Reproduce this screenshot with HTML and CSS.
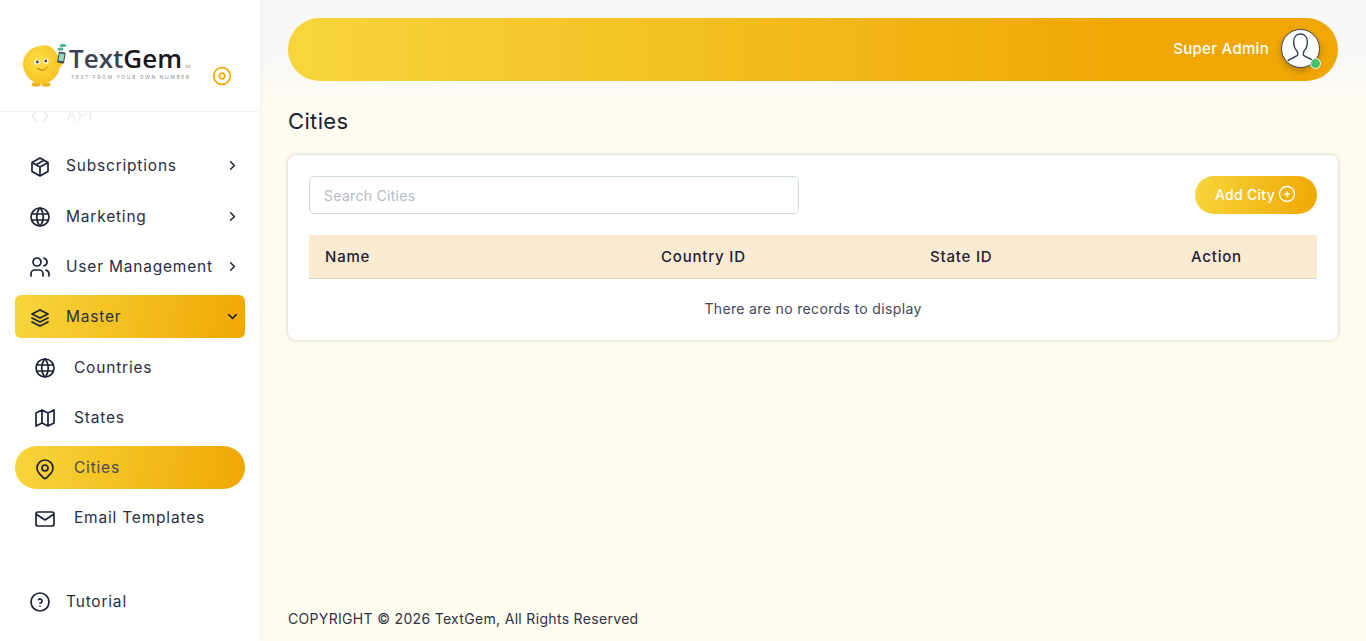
FILE: index.html
```html
<!DOCTYPE html>
<html lang="en">
<head>
  <meta charset="UTF-8" />
  <meta name="viewport" content="width=device-width, initial-scale=1" />
  <title>Cities - TextGem</title>
  <link rel="stylesheet" href="styles.css">
</head>
<body>

<svg class="sprite" aria-hidden="true">
  <symbol id="i-code" viewBox="0 0 24 24"><path d="M9 7l-5 5l5 5M15 7l5 5l-5 5"/></symbol>
  <symbol id="i-package" viewBox="0 0 24 24"><path d="M12 3l8 4.5v9l-8 4.5l-8 -4.5v-9l8 -4.5M12 12l8 -4.5M12 12v9M12 12l-8 -4.5M16 5.25l-8 4.5"/></symbol>
  <symbol id="i-world" viewBox="0 0 24 24"><path d="M3 12a9 9 0 1 0 18 0a9 9 0 0 0 -18 0M3.6 9h16.8M3.6 15h16.8M11.5 3a17 17 0 0 0 0 18M12.5 3a17 17 0 0 1 0 18"/></symbol>
  <symbol id="i-users" viewBox="0 0 24 24"><path d="M5 7a4 4 0 1 0 8 0a4 4 0 1 0 -8 0M3 21v-2a4 4 0 0 1 4 -4h4a4 4 0 0 1 4 4v2M16 3.13a4 4 0 0 1 0 7.75M21 21v-2a4 4 0 0 0 -3 -3.85"/></symbol>
  <symbol id="i-stack" viewBox="0 0 24 24"><path d="M12 4l-8 4l8 4l8 -4l-8 -4M4 12l8 4l8 -4M4 16l8 4l8 -4"/></symbol>
  <symbol id="i-map" viewBox="0 0 24 24"><path d="M3 7l6 -3l6 3l6 -3v13l-6 3l-6 -3l-6 3v-13M9 4v13M15 7v13"/></symbol>
  <symbol id="i-pin" viewBox="0 0 24 24"><path d="M9 11a3 3 0 1 0 6 0a3 3 0 0 0 -6 0M17.657 16.657l-4.243 4.243a2 2 0 0 1 -2.827 0l-4.244 -4.243a8 8 0 1 1 11.314 0z"/></symbol>
  <symbol id="i-mail" viewBox="0 0 24 24"><path d="M3 7a2 2 0 0 1 2 -2h14a2 2 0 0 1 2 2v10a2 2 0 0 1 -2 2h-14a2 2 0 0 1 -2 -2v-10zM3 7l9 6l9 -6"/></symbol>
  <symbol id="i-help" viewBox="0 0 24 24"><path d="M3 12a9 9 0 1 0 18 0a9 9 0 0 0 -18 0M12 16v.01M12 13a2 2 0 0 0 .914 -3.782a1.98 1.98 0 0 0 -2.414 .483"/></symbol>
  <symbol id="i-right" viewBox="0 0 24 24"><path d="M9 6l6 6l-6 6"/></symbol>
  <symbol id="i-down" viewBox="0 0 24 24"><path d="M6 9l6 6l6 -6"/></symbol>
  <symbol id="i-plus" viewBox="0 0 24 24"><path d="M3 12a9 9 0 1 0 18 0a9 9 0 0 0 -18 0M9 12h6M12 9v6"/></symbol>
</svg>

<div class="layout">
  <aside class="sidebar">
    <div class="brand">
      <div class="logo">
        <svg class="mascot" viewBox="0 0 46 44">
          <defs>
            <radialGradient id="body" cx="45%" cy="40%" r="60%">
              <stop offset="0" stop-color="#fde04a"/>
              <stop offset="1" stop-color="#f7c321"/>
            </radialGradient>
          </defs>
          <ellipse cx="14" cy="41.5" rx="4.5" ry="2.2" fill="#efb41d"/>
          <ellipse cx="24" cy="41.5" rx="4.5" ry="2.2" fill="#efb41d"/>
          <path d="M37 19l4-3l1 3l-4 6z" fill="#f7c321"/>
          <path d="M18 3c6-2 11 0 14 4c4 4 6 9 6 14c0 11-8 19-18 20C10 41 2 32 1 22C1 12 8 4 18 3z" fill="url(#body)"/>
          <circle cx="15" cy="19" r="2.6" fill="#fff"/>
          <circle cx="24" cy="18" r="2.6" fill="#fff"/>
          <circle cx="15.3" cy="19" r="1.4" fill="#3b4252"/>
          <circle cx="23.8" cy="18" r="1.4" fill="#3b4252"/>
          <path d="M15.5 25c3 3 7 3 10 -1" fill="none" stroke="#c98a12" stroke-width="1.1"/>
          <rect x="36" y="9" width="7" height="11" rx="1" fill="#3b4252" transform="rotate(10 39 14)"/>
          <rect x="37" y="10.5" width="5" height="7.5" fill="#8fd8c8" transform="rotate(10 39 14)"/>
          <ellipse cx="38.5" cy="6" rx="3" ry="1.6" fill="#47b89c"/>
          <ellipse cx="41" cy="2.5" rx="3.2" ry="1.7" fill="#47b89c"/>
        </svg>
        <div class="logo-text">
          <div class="logo-name">Text<b>Gem</b><small>.io</small></div>
          <div class="logo-tag">TEXT FROM YOUR OWN NUMBER</div>
        </div>
      </div>
      <svg class="toggle" viewBox="0 0 20 20"><circle cx="10" cy="10" r="8.3"/><circle cx="10" cy="10" r="2.8"/></svg>
    </div>

    <nav class="menu">
      <a class="item item-api"><svg class="icon"><use href="#i-code"/></svg><span>API</span></a>
      <a class="item"><svg class="icon"><use href="#i-package"/></svg><span>Subscriptions</span><svg class="chev"><use href="#i-right"/></svg></a>
      <a class="item"><svg class="icon"><use href="#i-world"/></svg><span>Marketing</span><svg class="chev"><use href="#i-right"/></svg></a>
      <a class="item"><svg class="icon"><use href="#i-users"/></svg><span>User Management</span><svg class="chev"><use href="#i-right"/></svg></a>
      <a class="item item-open"><svg class="icon"><use href="#i-stack"/></svg><span>Master</span><svg class="chev"><use href="#i-down"/></svg></a>
      <a class="item sub"><svg class="icon"><use href="#i-world"/></svg><span>Countries</span></a>
      <a class="item sub"><svg class="icon"><use href="#i-map"/></svg><span>States</span></a>
      <a class="item sub sub-active"><svg class="icon"><use href="#i-pin"/></svg><span>Cities</span></a>
      <a class="item sub"><svg class="icon"><use href="#i-mail"/></svg><span>Email Templates</span></a>
    </nav>

    <a class="item tutorial"><svg class="icon"><use href="#i-help"/></svg><span>Tutorial</span></a>
  </aside>

  <main class="content">
    <header class="topbar">
      <span class="username">Super Admin</span>
      <div class="avatar">
        <svg viewBox="0 0 38 38">
          <path d="M6 32c2-3 8-4 10-6c1-2 0-3-1-5c-2-2-3-5-3-9c0-5 3-8 7-8s7 3 7 8c0 4-1 7-3 9c-1 2-2 3-1 5c2 2 8 3 10 6" fill="none" stroke="#3d4656" stroke-width="1.5"/>
        </svg>
        <i class="dot"></i>
      </div>
    </header>

    <h1 class="page-title">Cities</h1>

    <section class="card">
      <div class="toolbar">
        <input class="search" type="text" placeholder="Search Cities" />
        <button class="btn-add">Add City<svg><use href="#i-plus"/></svg></button>
      </div>
      <div class="table-head">
        <div>Name</div>
        <div>Country ID</div>
        <div>State ID</div>
        <div>Action</div>
      </div>
      <div class="no-records">There are no records to display</div>
    </section>

    <footer class="footer">COPYRIGHT © 2026 TextGem, All Rights Reserved</footer>
  </main>
</div>

</body>
</html>
```

FILE: styles.css
```css
* {
  box-sizing: border-box;
}

body {
  margin: 0;
  font-family: Inter, "Noto Sans", sans-serif;
  color: #1d2136;
  background: #fffcf0;
  overflow: hidden;
}

.sprite {
  display: none;
}

.layout {
  display: flex;
  height: 641px;
}

/* sidebar */
.sidebar {
  width: 260px;
  flex-shrink: 0;
  background: #fff;
  box-shadow: 0 0 6px rgba(0,0,0,0.06);
  display: flex;
  flex-direction: column;
  position: relative;
}

.brand {
  height: 112px;
  flex-shrink: 0;
  border-bottom: 1px solid #f4f4f4;
  padding: 43px 0 0 22px;
  display: flex;
  align-items: flex-start;
}

.logo {
  display: flex;
  width: 181px;
}

.mascot {
  width: 46px;
  height: 44px;
  flex-shrink: 0;
}

.logo-text {
  margin-left: 1px;
}

.logo-name {
  font-family: "Open Sans", sans-serif;
  font-size: 26px;
  line-height: 24px;
  margin-top: 3px;
  color: #3b4252;
  font-weight: 600;
  white-space: nowrap;
}

.logo-name b {
  color: #16181d;
  font-weight: 600;
}

.logo-name small {
  font-size: 6px;
  line-height: 1;
  font-weight: 400;
  color: #888;
  margin-left: 2px;
}

.logo-tag {
  font-size: 5px;
  line-height: 6px;
  letter-spacing: 1.55px;
  color: #8b8f98;
  margin-top: 4px;
  padding-left: 2px;
  white-space: nowrap;
}

.toggle {
  width: 20px;
  height: 20px;
  margin: 23px 0 0 9px;
  fill: none;
  stroke: #f2a90b;
  stroke-width: 1.7;
}

.menu {
  flex: 1;
  overflow: hidden;
  padding: 0 15px;
}

.item {
  display: flex;
  align-items: center;
  height: 43.33px;
  margin-bottom: 7px;
  padding-left: 13px;
  font-size: 15.5px;
  letter-spacing: 0.8px;
  color: #2a2e42;
}

.item span {
  margin-left: 14px;
  white-space: nowrap;
}

.item-api {
  margin-top: -18.3px;
  opacity: 0.07;
}

.icon {
  width: 24px;
  height: 24px;
  margin-top: 2px;
  flex-shrink: 0;
  fill: none;
  stroke: #1d2136;
  stroke-width: 1.7;
  stroke-linecap: round;
  stroke-linejoin: round;
}

.chev {
  width: 15px;
  height: 15px;
  margin-left: auto;
  margin-right: 5px;
  fill: none;
  stroke: #1d2136;
  stroke-width: 2.4;
  stroke-linecap: round;
  stroke-linejoin: round;
}

.item-open {
  background: linear-gradient(100deg, #f7d63c, #f0a704);
  border-radius: 6px;
}

.sub {
  padding-left: 18px;
}

.sub span {
  margin-left: 17px;
}

.sub-active {
  background: linear-gradient(100deg, #f7d63c, #f0a704);
  border-radius: 22px;
}

.sub-active span {
  color: #4a4a4a;
}

.tutorial {
  margin: 0 15px 18px;
}

/* main area */
.content {
  flex: 1;
  min-width: 0;
  padding: 18px 28px 0;
  display: flex;
  flex-direction: column;
  background: linear-gradient(#f8f8f8 60px, #fffcf0 105px);
}

.topbar {
  height: 63px;
  flex-shrink: 0;
  border-radius: 32px;
  background: linear-gradient(90deg, #f7d63c, #f0a704 80%);
  display: flex;
  align-items: center;
  justify-content: flex-end;
  padding: 0 18px 2px 0;
}

.username {
  color: #fff;
  font-size: 15px;
  font-weight: 500;
  letter-spacing: 0.3px;
  margin-right: 12px;
}

.avatar {
  width: 39px;
  height: 39px;
  border-radius: 50%;
  background: #fff;
  border: 1.5px solid #3d4656;
  box-shadow: 0 3px 6px rgba(0,0,0,0.25);
  position: relative;
}

.avatar svg {
  display: block;
  width: 100%;
  height: 100%;
}

.dot {
  position: absolute;
  right: -2px;
  bottom: -2px;
  width: 11px;
  height: 11px;
  border-radius: 50%;
  background: #43c26b;
  border: 1px solid #fff;
}

.page-title {
  margin: 25px 0 19px;
  font-size: 22px;
  line-height: 30px;
  font-weight: 400;
  letter-spacing: 0.35px;
}

.card {
  background: #fff;
  border-radius: 8px;
  box-shadow: 0 0 4px rgba(0,0,0,0.2);
  padding: 21px;
  height: 185px;
}

.toolbar {
  display: flex;
  justify-content: space-between;
  margin-bottom: 21px;
}

.search {
  width: 490px;
  height: 38px;
  border: 1px solid #cfdcdc;
  border-radius: 5px;
  padding: 0 14px;
  font-family: inherit;
  font-size: 14px;
  letter-spacing: 0.3px;
}

.search::placeholder {
  color: #b9bcc4;
}

.btn-add {
  width: 122px;
  height: 38px;
  border: none;
  border-radius: 19px;
  padding: 0 0 2px;
  background: linear-gradient(100deg, #f7d63c, #f0a704);
  color: #fff;
  font-family: inherit;
  font-size: 14px;
  font-weight: 500;
  letter-spacing: 0.3px;
  display: flex;
  align-items: center;
  justify-content: center;
  gap: 2px;
}

.btn-add svg {
  width: 20px;
  height: 20px;
  fill: none;
  stroke: #fff;
  stroke-width: 1.6;
  stroke-linecap: round;
}

.table-head {
  display: grid;
  grid-template-columns: 336px 269px 261px 142px;
  height: 44px;
  align-items: center;
  background: #fcebd3;
  border-bottom: 1px solid #e0d5c0;
  font-size: 15px;
  font-weight: 500;
  letter-spacing: 0.8px;
}

.table-head div {
  padding-left: 16px;
}

.no-records {
  text-align: center;
  font-size: 14px;
  letter-spacing: 0.35px;
  color: #44475a;
  line-height: 20px;
  margin-top: 20px;
}

.footer {
  margin-top: auto;
  padding-bottom: 12px;
  font-size: 14px;
  line-height: 20px;
  letter-spacing: 0.32px;
  color: #2f3245;
}
```
